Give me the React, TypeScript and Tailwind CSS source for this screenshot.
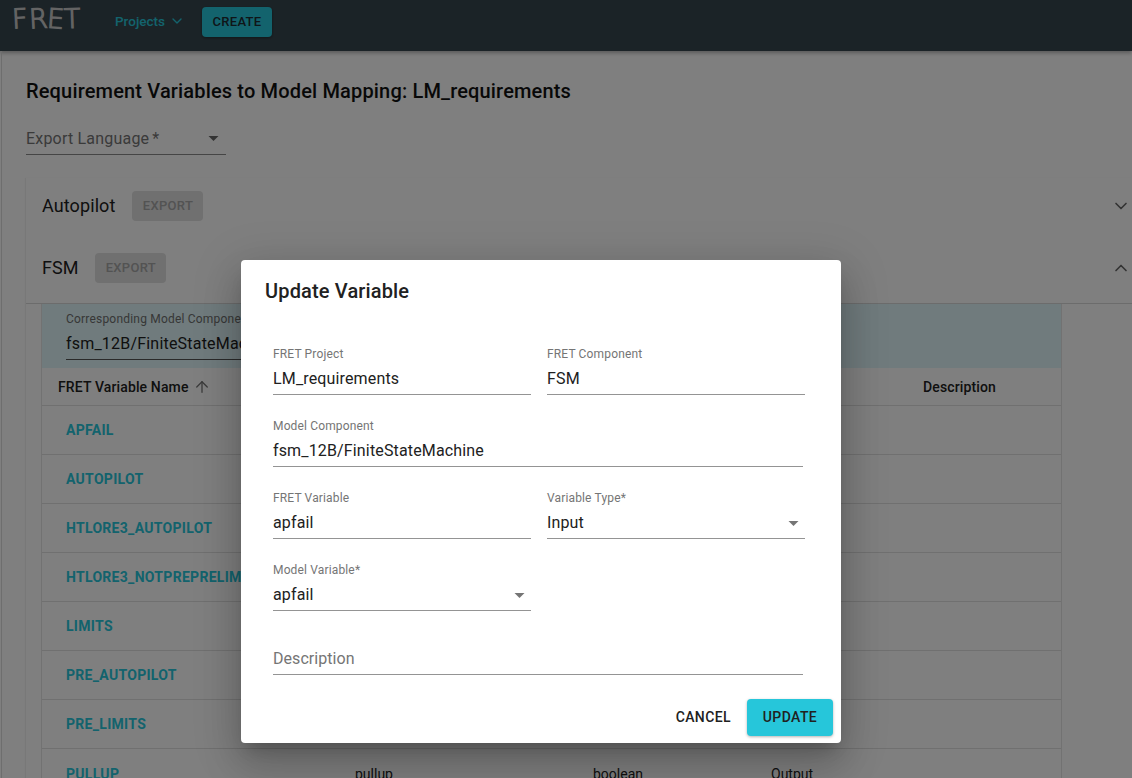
import React from "react";
import { ChevronDown, ChevronUp, ArrowUp } from "lucide-react";

const variables = [
  "APFAIL",
  "AUTOPILOT",
  "HTLORE3_AUTOPILOT",
  "HTLORE3_NOTPREPRELIMITS",
  "LIMITS",
  "PRE_AUTOPILOT",
  "PRE_LIMITS",
];

const Caret = ({ className }: { className: string }) => (
  <svg viewBox="0 0 10 5" className={className}>
    <path d="M0 0 L5 5 L10 0 Z" fill="currentColor" />
  </svg>
);

type FieldProps = {
  label?: string;
  value?: string;
  placeholder?: string;
  select?: boolean;
  width: string;
};

const Field = ({ label, value, placeholder, select, width }: FieldProps) => (
  <div className={`relative flex h-12 flex-col border-b border-[#949494] ${width}`}>
    <span className="h-5 text-xs leading-[14px] tracking-[0.15px] text-[#757575]">{label}</span>
    {placeholder ? (
      <span className="text-base leading-6 tracking-[0.05px] text-[#757575]">{placeholder}</span>
    ) : (
      <span className="text-base leading-6 tracking-[0.15px] text-[#212121]">{value}</span>
    )}
    {select && <Caret className="absolute right-[6px] bottom-3 h-[5px] w-[11px] text-[#757575]" />}
  </div>
);

export default function App() {
  return (
    <div className="relative h-screen overflow-hidden bg-white font-['Roboto',sans-serif] text-[#212121]">
      {/* app bar */}
      <header className="flex h-[51px] items-start bg-[#37474f] shadow-[0_2px_4px_rgba(0,0,0,0.3)]">
        <div className="ml-3 mt-[3px] flex w-[66px] font-['DejaVu_Sans',sans-serif] text-[27px] font-extralight leading-8 text-[#c8c8c8] [-webkit-text-stroke:1.2px_#c8c8c8]">
          <span className="inline-block rotate-[-3deg]">F</span>
          <span className="ml-px inline-block rotate-[-3deg]">R</span>
          <span className="inline-block rotate-[4deg]">E</span>
          <span className="inline-block rotate-[-2deg]">T</span>
        </div>
        <div className="ml-[37px] mt-[13px] flex items-center gap-1 text-[13.5px] font-medium leading-4 text-[#26c6da]">
          Projects
          <ChevronDown size={16} strokeWidth={2} />
        </div>
        <button className="ml-[17px] mt-[7px] h-[30px] w-[70px] rounded bg-[#26c6da] text-[13px] font-medium tracking-[0.3px] text-[#1f2a30] shadow-[0_1px_3px_rgba(0,0,0,0.4)]">
          CREATE
        </button>
      </header>

      <main className="ml-px border-l border-[#dcdcdc] pl-6">
        <h1 className="pt-[26px] text-xl leading-7 font-medium tracking-[0.16px] text-[#111]">
          Requirement Variables to Model Mapping: LM_requirements
        </h1>

        <div className="mt-[18px] flex h-[32px] w-[200px] items-center justify-between border-b border-[#8a8a8a] pr-[7px] text-base tracking-[0.2px] text-[#757575]">
          <span>
            Export Language<span className="ml-[3px]">*</span>
          </span>
          <Caret className="h-[5px] w-[11px] text-[#666]" />
        </div>

        {/* accordion */}
        <section className="mt-[23px] shadow-[-1px_0_1px_rgba(0,0,0,0.06)]">
          <div className="flex h-14 items-center pl-4 pr-px">
            <span className="text-lg tracking-[0.1px]">Autopilot</span>
            <button className="ml-[17px] h-[30px] w-[71px] rounded bg-[#e0e0e0] text-[13px] font-medium tracking-[0.3px] text-[#a6a6a6]">
              EXPORT
            </button>
            <ChevronDown size={20} strokeWidth={2} className="ml-auto text-[#666]" />
          </div>
          <div className="flex h-[70px] items-center border-b border-[#d9d9d9] pb-0.5 pl-4 pr-px">
            <span className="text-lg">FSM</span>
            <button className="ml-[17px] h-[30px] w-[71px] rounded bg-[#e0e0e0] text-[13px] font-medium tracking-[0.3px] text-[#a6a6a6]">
              EXPORT
            </button>
            <ChevronUp size={20} strokeWidth={2} className="ml-auto text-[#666]" />
          </div>

          {/* table panel */}
          <div className="ml-[15px] w-[1021px] border-x border-[#e4e4e4]">
            <div className="h-[64px] bg-[#e0f7fa] pl-6 pt-2">
              <div className="text-xs leading-[14px] tracking-[0.2px] text-[#6f6f6f]">Corresponding Model Component</div>
              <div className="mt-[6px] w-[300px] border-b border-[#555] pb-[3px] text-base leading-6 tracking-[0.2px]">
                fsm_12B/FiniteStateMachine
              </div>
            </div>
            <div className="grid h-[38px] grid-cols-[297px_238px_178px_152px_1fr] items-center border-b border-[#e0e0e0] pl-4 text-sm font-medium tracking-[0.13px]">
              <span className="flex items-center gap-1">
                FRET Variable Name
                <ArrowUp size={18} strokeWidth={1.75} className="text-[#757575]" />
              </span>
              <span />
              <span />
              <span />
              <span>Description</span>
            </div>
            {variables.map((name) => (
              <div key={name} className="grid h-[49px] grid-cols-[289px_238px_178px_152px_1fr] items-center border-b border-[#e0e0e0] pl-6 text-sm">
                <span className="text-sm font-bold tracking-[0.3px] text-[#26c6da]">{name}</span>
              </div>
            ))}
            <div className="grid h-[49px] grid-cols-[289px_238px_178px_152px_1fr] items-center pl-6 text-sm">
              <span className="text-sm font-bold tracking-[0.3px] text-[#26c6da]">PULLUP</span>
              <span>pullup</span>
              <span>boolean</span>
              <span>Output</span>
            </div>
          </div>
        </section>
      </main>

      {/* modal backdrop */}
      <div className="absolute inset-0 bg-black/50" />

      {/* dialog */}
      <div className="absolute left-[241px] top-[260px] h-[483px] w-[600px] rounded bg-white shadow-[0_11px_15px_-7px_rgba(0,0,0,0.2),0_24px_38px_3px_rgba(0,0,0,0.14),0_9px_46px_8px_rgba(0,0,0,0.12)]">
        <h2 className="px-6 pt-[15px] text-xl leading-8 font-medium tracking-[0.15px]">Update Variable</h2>
        <div className="mt-10 flex flex-col gap-6 pl-8">
          <div className="flex gap-4">
            <Field label="FRET Project" value="LM_requirements" width="w-[258px]" />
            <Field label="FRET Component" value="FSM" width="w-[258px]" />
          </div>
          <Field label="Model Component" value="fsm_12B/FiniteStateMachine" width="w-[530px]" />
          <div className="flex gap-4">
            <Field label="FRET Variable" value="apfail" width="w-[258px]" />
            <Field label="Variable Type*" value="Input" select width="w-[258px]" />
          </div>
          <Field label="Model Variable*" value="apfail" select width="w-[258px]" />
        </div>
        <div className="mt-4 pl-8">
          <Field placeholder="Description" width="w-[530px]" />
        </div>
        <div className="mt-6 flex justify-end gap-2 pr-2">
          <button className="h-[37px] px-2 pb-0.5 text-sm font-medium tracking-[0.4px]">CANCEL</button>
          <button className="h-[37px] w-[86px] rounded bg-[#26c6da] pb-0.5 text-sm font-medium tracking-[0.4px] shadow-[0_1px_3px_rgba(0,0,0,0.3)]">
            UPDATE
          </button>
        </div>
      </div>
    </div>
  );
}
